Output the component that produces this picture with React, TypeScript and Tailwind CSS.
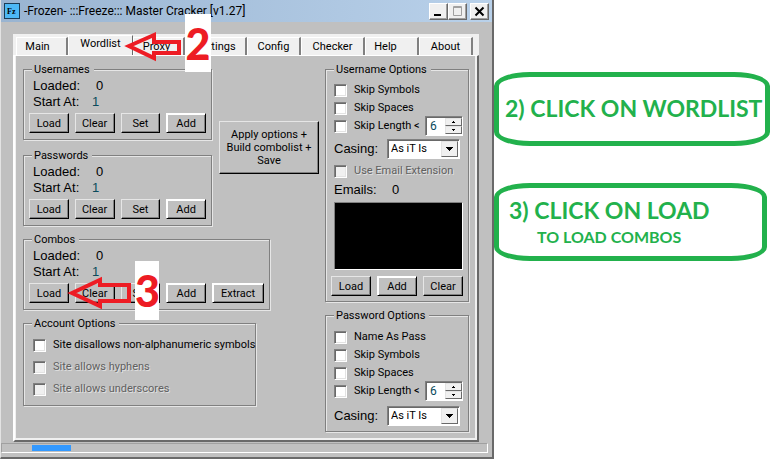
import { useId, type ReactNode } from "react";
import clsx from "clsx";

function Group({ title, className, children }: { title: string; className?: string; children: ReactNode }) {
  return (
    <fieldset
      className={clsx(
        "min-w-0 border border-[#808080] px-[5px] pb-[5px] shadow-[1px_1px_0_#e6e6e6,inset_1px_1px_0_#e6e6e6]",
        className,
      )}
    >
      <legend className="ml-[3px] bg-[#c0c0c0] pt-px pr-1 pl-0.5 leading-[13px]">{title}</legend>
      {children}
    </fieldset>
  );
}

function PushButton({ label, strong, wide }: { label: string; strong?: boolean; wide?: boolean }) {
  return (
    <button
      type="button"
      className={clsx(
        "h-5 border border-r-black border-b-black pt-0.5 text-center leading-4",
        wide ? "w-[52px]" : "w-10",
        strong
          ? "border-t-white border-l-white shadow-[inset_1px_1px_0_#fff,inset_-1px_-1px_0_#808080]"
          : "border-t-[#e6e6e6] border-l-[#e6e6e6] shadow-[inset_-1px_-1px_0_#808080]",
      )}
    >
      {label}
    </button>
  );
}

function Check({ label, disabled }: { label: string; disabled?: boolean }) {
  return (
    <label
      className={clsx(
        "flex items-center gap-[7px] whitespace-nowrap",
        disabled && "text-[#606060] [text-shadow:1px_1px_0_#e0e0e0]",
      )}
    >
      <input
        type="checkbox"
        disabled={disabled}
        className="size-[13px] shrink-0 appearance-none border border-t-[#808080] border-r-white border-b-white border-l-[#808080] bg-white shadow-[inset_1px_1px_0_#696969,inset_-1px_-1px_0_#e3e3e3] disabled:bg-[#f0f0f0]"
      />
      {label}
    </label>
  );
}

function ListGroup({ title, className, extract }: { title: string; className?: string; extract?: boolean }) {
  return (
    <Group title={title} className={className}>
      <div className="pt-0.5 pl-1 font-['Liberation_Sans',sans-serif] text-[13px] leading-4">
        <p className="flex"><span className="w-[63px]">Loaded:</span>0</p>
        <p className="flex"><span className="w-[59px]">Start At:</span><span className="text-[#0a4a5c]">1</span></p>
      </div>
      <div className="mt-[3px] mb-px flex gap-1.5">
        <PushButton label="Load" />
        <PushButton label="Clear" />
        <PushButton label="Set" />
        <PushButton label="Add" strong />
        {extract && <PushButton label="Extract" strong wide />}
      </div>
    </Group>
  );
}

function LengthRow() {
  return (
    <div className="flex h-[18px] items-center justify-between">
      <Check label="Skip Length <" />
      <div className="flex h-5 w-[38px] border border-t-[#808080] border-r-white border-b-white border-l-[#808080] bg-white shadow-[inset_1px_1px_0_#696969]">
        <input
          type="number"
          aria-label="Minimum length"
          defaultValue={6}
          className="w-[19px] [appearance:textfield] bg-transparent pl-1 text-xs text-[#0a4a5c] outline-none [&::-webkit-inner-spin-button]:appearance-none"
        />
        <div className="my-px flex flex-1 flex-col">
          {["up", "down"].map((dir) => (
            <button
              key={dir}
              type="button"
              aria-label={dir}
              className="flex flex-1 items-center justify-center border border-t-[#e3e3e3] border-r-[#696969] border-b-[#696969] border-l-[#e3e3e3] bg-[#f0f0f0]"
            >
              <svg width="3" height="2" viewBox="0 0 3 2" shapeRendering="crispEdges">
                <path d={dir === "up" ? "M1 0h1v1h1v1H0V1h1z" : "M0 0h3v1H2v1H1V1H0z"} />
              </svg>
            </button>
          ))}
        </div>
      </div>
    </div>
  );
}

function CasingRow({ className }: { className?: string }) {
  const id = useId();
  return (
    <div className={clsx("flex h-5 items-center", className)}>
      <label htmlFor={id} className="w-[53px] font-['Liberation_Sans',sans-serif] text-[13px]">Casing:</label>
      <div className="relative h-5 w-[73px]">
        <select
          id={id}
          className="h-full w-full appearance-none border border-t-[#808080] border-r-white border-b-white border-l-[#808080] bg-white pl-[3px] shadow-[inset_1px_1px_0_#696969]"
        >
          <option>As iT Is</option>
        </select>
        <span className="pointer-events-none absolute top-0.5 right-0.5 flex h-4 w-[17px] items-center justify-center border border-t-[#e3e3e3] border-r-[#696969] border-b-[#696969] border-l-[#e3e3e3] bg-[#f0f0f0]">
          <svg width="7" height="4" viewBox="0 0 7 4" shapeRendering="crispEdges">
            <path d="M0 0h7v1H6v1H5v1H4v1H3V3H2V2H1V1H0z" />
          </svg>
        </span>
      </div>
    </div>
  );
}

const tabs = [
  { name: "Main", size: "w-[52px] pr-2" },
  { name: "Wordlist", size: "w-[65px]" },
  { name: "Proxy", size: "w-[52px] pr-1" },
  { name: "Settings", size: "w-[62px]" },
  { name: "Config", size: "w-[54px]" },
  { name: "Checker", size: "w-16" },
  { name: "Help", size: "w-[54px] pr-3" },
  { name: "About", size: "w-[54px]" },
];

function CaptionButton({ label, children }: { label: string; children: ReactNode }) {
  return (
    <button
      type="button"
      aria-label={label}
      className="flex h-[17px] w-[19px] items-center justify-center border border-t-white border-r-[#696969] border-b-[#696969] border-l-white bg-[#f0f0f0] shadow-[inset_-1px_-1px_0_#a0a0a0]"
    >
      <svg width="13" height="13" viewBox="0 0 13 13" fill="none">{children}</svg>
    </button>
  );
}

function Arrow({ className, d }: { className: string; d: string }) {
  return (
    <svg className={clsx("pointer-events-none absolute", className)} width="66" height="36" viewBox="0 0 66 36" fill="none" stroke="#ed1c24" strokeWidth="4">
      <path d={d} />
    </svg>
  );
}

export default function App() {
  return (
    <main className="flex items-start bg-white font-[Roboto,'Liberation_Sans',sans-serif] text-[11px] text-black">
      <section className="relative shrink-0 border-r-2 border-b-2 border-l border-r-[#696969] border-b-[#696969] border-l-[#e3e3e3] bg-[#c0c0c0]">
        <header className="flex h-[22px] items-center bg-linear-to-r from-[#99b4d1] to-[#b9d1ea] pr-[3px] pl-[3px]">
          <svg width="16" height="16" viewBox="0 0 16 16">
            <path fill="#1b3c55" d="M0 0h16v16H0z" />
            <path fill="#4db8f5" d="M1 1h14v14H1z" />
            <text x="3" y="11" fontSize="8" fontWeight="700" fontFamily="Liberation Serif, serif">Fz</text>
          </svg>
          <h1 className="ml-1 flex-1 text-xs">-Frozen- :::Freeze::: Master Cracker [v1.27]</h1>
          <CaptionButton label="Minimize"><path d="M2 10h7" stroke="#000" strokeWidth="2" /></CaptionButton>
          <CaptionButton label="Maximize"><path d="M2.500 1.500h8v9h-8zM2 2.500h9" stroke="#a0a0a0" /></CaptionButton>
          <span className="w-[3px]" />
          <CaptionButton label="Close"><path d="m2.500 2.500 8 8m0-8-8 8" stroke="#000" strokeWidth="2" /></CaptionButton>
        </header>

        <div className="mr-[13px] ml-3 pt-3">
          <nav className="flex h-[21px] items-end bg-[#f0f0f0] pl-[3px]">
            {tabs.map(({ name, size }) => (
              <button
                key={name}
                type="button"
                className={clsx(
                  "border-t border-l border-t-white border-l-white text-center",
                  size,
                  name === "Wordlist"
                    ? "h-5 border-r border-r-[#696969] pb-1 leading-4"
                    : "h-[18px] border-r-2 border-r-[#808080] leading-4",
                  name === "Main" && "border-r-0",
                )}
              >
                {name}
              </button>
            ))}
          </nav>
          <div className="flex border-t border-r-2 border-b-2 border-l-2 border-t-white border-r-[#696969] border-b-[#696969] border-l-white pt-1.5 pr-2 pb-2 pl-2 shadow-[inset_1px_0_0_#f0f0f0,inset_-2px_-2px_0_#f0f0f0]">
            <div className="w-[302px]">
              <div className="flex items-start gap-[7px]">
                <div className="w-[189px]">
                  <ListGroup title="Usernames" />
                  <ListGroup title="Passwords" className="mt-2" />
                </div>
                <button
                  type="button"
                  className="mt-[59px] h-[53px] w-[100px] border border-t-[#e6e6e6] border-r-black border-b-black border-l-[#e6e6e6] leading-[13px] shadow-[inset_-1px_-1px_0_#808080]"
                >
                  Apply options +<br />Build combolist +<br />Save
                </button>
              </div>
              <ListGroup title="Combos" className="mt-1.5 w-[247px]" extract />
              <Group title="Account Options" className="mt-1.5 w-[233px]">
                <div className="grid auto-rows-[22px] pt-1 pl-1">
                  <Check label="Site disallows non-alphanumeric symbols" />
                  <Check label="Site allows hyphens" disabled />
                  <Check label="Site allows underscores" disabled />
                </div>
              </Group>
            </div>

            <div className="w-36">
              <Group title="Username Options">
                <div className="grid auto-rows-[18px] pt-[5px] pl-[3px]">
                  <Check label="Skip Symbols" />
                  <Check label="Skip Spaces" />
                  <LengthRow />
                </div>
                <CasingRow className="mt-1 pl-[3px]" />
                <div className="mt-[3px] grid auto-rows-[18px] pl-[3px]">
                  <Check label="Use Email Extension" disabled />
                  <p className="flex font-['Liberation_Sans',sans-serif] text-[13px]"><span className="w-[58px]">Emails:</span>0</p>
                </div>
                <div className="mt-1 ml-[3px] h-[68px] border border-t-[#808080] border-r-white border-b-white border-l-[#808080] bg-black" />
                <div className="mt-1.5 flex gap-1.5">
                  <PushButton label="Load" />
                  <PushButton label="Add" strong />
                  <PushButton label="Clear" />
                </div>
              </Group>
              <Group title="Password Options" className="mt-1.5">
                <div className="grid auto-rows-[18px] pt-1.5 pl-[3px]">
                  <Check label="Name As Pass" />
                  <Check label="Skip Symbols" />
                  <Check label="Skip Spaces" />
                  <LengthRow />
                </div>
                <CasingRow className="mt-1.5 pl-[3px]" />
              </Group>
            </div>
          </div>
        </div>

        <footer className="mt-px mr-1 mb-1 h-2.5 border border-t-[#a0a0a0] border-r-white border-b-white border-l-[#a0a0a0] pt-px pl-[30px]">
          <div className="h-1.5 w-[39px] bg-[#3399ff]" />
        </footer>

        <Arrow className="top-[30px] left-[120px]" d="M8 16 33 5V12H58V23H33V28Z" />
        <span className="absolute top-3.5 left-[184px] h-[58px] w-[26px] bg-white text-center font-[Lato,sans-serif] text-[43px] leading-[60px] font-black text-[#ed1c24]">2</span>
        <Arrow className="top-[275px] left-[65px]" d="M6 18 34 5V10H63V26H34V31Z" />
        <span className="absolute top-[261px] left-[134px] h-[59px] w-6 bg-white text-center font-[Lato,sans-serif] text-[43px] leading-[60px] font-black text-[#ed1c24]">3</span>
      </section>

      <aside className="flex-1 pt-[72px] pr-2 font-[Lato,sans-serif] font-bold whitespace-nowrap text-[#22b14c]">
        <div className="h-[74px] rounded-[36px/14px] border-[5px] border-[#22b14c] pl-1.5 text-[23px] leading-[62px]">
          2) CLICK ON WORDLIST
        </div>
        <div className="mt-[37px] mr-[3px] h-[78px] rounded-[36px/14px] border-[5px] border-[#22b14c] pt-2 pl-2.5 text-[23px] leading-[28px]">
          3) CLICK ON LOAD
          <p className="pl-7 text-base leading-[26px]">TO LOAD COMBOS</p>
        </div>
      </aside>
    </main>
  );
}
